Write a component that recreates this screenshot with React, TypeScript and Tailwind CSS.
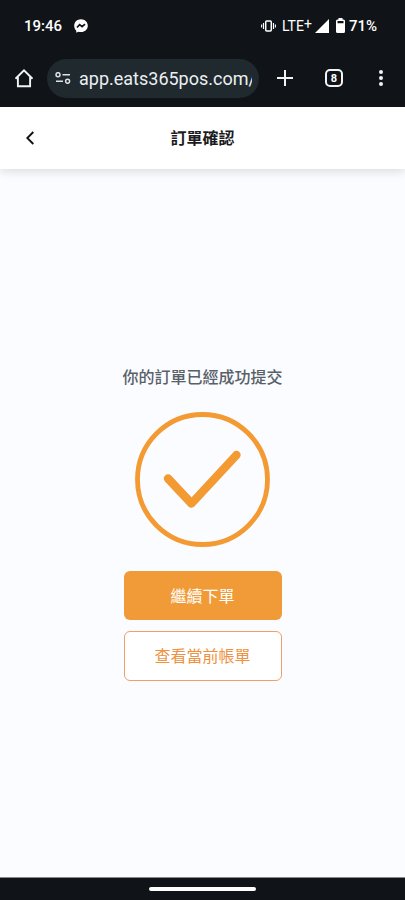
import React from "react";

const StatusBar = () => {
  return (
    <div className="flex h-[51px] items-center justify-between pl-6 pr-7 font-[Roboto,sans-serif] text-white">
      <div className="flex items-center gap-3">
        <span className="text-[15px] leading-5 font-medium">19:46</span>
        <svg className="size-[14px]" viewBox="0 0 14 14" aria-hidden="true">
          <path
            fill="#fff"
            d="M7 .3C3.1.3.2 3.1.2 6.8c0 2 .8 3.7 2.100 4.900v2l2-1c.8.3 1.700.4 2.700.4 3.900 0 6.800-2.700 6.800-6.300S10.900.3 7 .3z"
          />
          <path
            d="M3 8.500l2.600-2.800 2.500 2 2.900-2.500"
            fill="none"
            stroke="#101418"
            strokeWidth="1.700"
          />
        </svg>
      </div>
      <div className="flex items-center">
        <svg className="h-3 w-[15px]" viewBox="0 0 15 12" fill="none" stroke="#fff" aria-hidden="true">
          <rect x="4.700" y="1" width="5.600" height="10" rx="1" strokeWidth="1.500" />
          <path d="M2.500 3v6M.6 4.500v3M12.500 3v6M14.400 4.500v3" strokeWidth="1.100" />
        </svg>
        <span className="ml-[6px] flex items-start text-sm leading-5">
          LTE
          <span className="text-sm leading-4">+</span>
        </span>
        <svg className="ml-[3px] size-[14px]" viewBox="0 0 14 14" aria-hidden="true">
          <path d="M14 0v14H0z" fill="#fff" />
        </svg>
        <svg className="ml-[7px] h-[15px] w-[9px]" viewBox="0 0 9 15" aria-hidden="true">
          <path
            fill="#fff"
            fillRule="evenodd"
            d="M2.500 0h4v1.500h1Q9 1.500 9 3v10.500Q9 15 7.500 15h-6Q0 15 0 13.500V3q0-1.500 1.500-1.500h1zM1.500 3v2.200h6V3z"
          />
        </svg>
        <span className="ml-1 text-[15px] leading-5 font-medium">71%</span>
      </div>
    </div>
  );
};

const BrowserBar = () => {
  return (
    <div className="flex h-14 items-center pl-[14px] pr-[14px] pb-[2px] text-white">
      <button aria-label="Home" className="shrink-0">
        <svg className="size-5" viewBox="0 0 20 20" fill="none" stroke="#f2f3f4" strokeWidth="1.900" aria-hidden="true">
          <path d="M1.500 10.800L10 2.400l8.500 8.400M3.900 8.800v9.400h12.200V8.800" />
        </svg>
      </button>
      <div className="ml-[13px] flex h-[39px] min-w-0 flex-1 items-center rounded-full bg-[#1f292e] pl-2 pr-[7px]">
        <svg className="h-3 w-4 shrink-0" viewBox="0 0 16 12" fill="none" stroke="#dfe3e6" strokeWidth="1.500" aria-hidden="true">
          <circle cx="3" cy="2.700" r="2" />
          <circle cx="12.600" cy="9.300" r="2" />
          <path d="M7.500 2.700H15M1 9.300h7" />
        </svg>
        <input
          aria-label="Address"
          className="ml-2 w-full min-w-0 flex-1 bg-transparent pt-[2px] font-[Roboto,sans-serif] text-lg leading-6 text-[#eceff1] outline-none"
          defaultValue="app.eats365pos.com/"
        />
      </div>
      <button aria-label="New tab" className="ml-[18px] shrink-0">
        <svg className="size-4" viewBox="0 0 16 16" stroke="#f2f3f4" strokeWidth="2" aria-hidden="true">
          <path d="M8 0v16M0 8h16" />
        </svg>
      </button>
      <button
        aria-label="Tabs"
        className="ml-8 flex size-[18px] shrink-0 items-center justify-center rounded-[5px] border-2 border-[#f2f3f4] font-[Roboto,sans-serif] text-[11px] leading-none font-bold"
      >
        8
      </button>
      <button aria-label="More options" className="ml-7 flex w-5 shrink-0 justify-center">
        <svg className="h-4 w-1" viewBox="0 0 4 16" fill="#f2f3f4" aria-hidden="true">
          <circle cx="2" cy="2" r="2" />
          <circle cx="2" cy="8" r="2" />
          <circle cx="2" cy="14" r="2" />
        </svg>
      </button>
    </div>
  );
};

const PageHeader = () => {
  return (
    <header className="relative grid h-[62px] grid-cols-[60px_1fr_60px] items-center bg-white shadow-[0_2px_10px_rgba(0,0,0,0.14)]">
      <button aria-label="返回" className="flex h-full items-center justify-center">
        <svg className="h-[14px] w-2" viewBox="0 0 8 14" fill="none" stroke="#111" strokeWidth="1.900" aria-hidden="true">
          <path d="M7.300 1L1.300 7l6 6" />
        </svg>
      </button>
      <h1 className="pt-[2px] text-center text-base leading-6 font-bold text-[#1c1c1e]">訂單確認</h1>
    </header>
  );
};

const App = () => {
  return (
    <div className="flex min-h-screen flex-col bg-[#fafcff] font-['Liberation_Sans','Noto_Sans_CJK_TC',sans-serif]">
      <div className="bg-[#101418]">
        <StatusBar />
        <BrowserBar />
      </div>
      <PageHeader />
      <main className="flex flex-1 flex-col items-center justify-center">
        <p className="pt-px text-base leading-6 font-medium text-[#596068]">你的訂單已經成功提交</p>
        <svg className="mt-[22px] size-[135px]" viewBox="0 0 135 135" fill="none" stroke="#f39a32" aria-hidden="true">
          <circle cx="67.500" cy="67.500" r="65" strokeWidth="4.800" />
          <path d="M33 66.500L56.500 91.500L101.500 43" strokeWidth="8.400" strokeLinecap="round" strokeLinejoin="round" />
        </svg>
        <div className="mt-6 flex w-[158px] flex-col gap-[11px]">
          <button className="h-[49px] rounded-md bg-[#f19b38] pt-[2px] text-base text-white">繼續下單</button>
          <button className="h-[50px] rounded-md border border-[#f0a062] bg-white pt-[2px] text-base text-[#ee9140]">
            查看當前帳單
          </button>
        </div>
      </main>
      <footer className="flex h-[23px] items-center justify-center border-t border-[#85888b] bg-[#101418]">
        <div className="h-1 w-[107px] rounded-full bg-white" />
      </footer>
    </div>
  );
};

export default App;
